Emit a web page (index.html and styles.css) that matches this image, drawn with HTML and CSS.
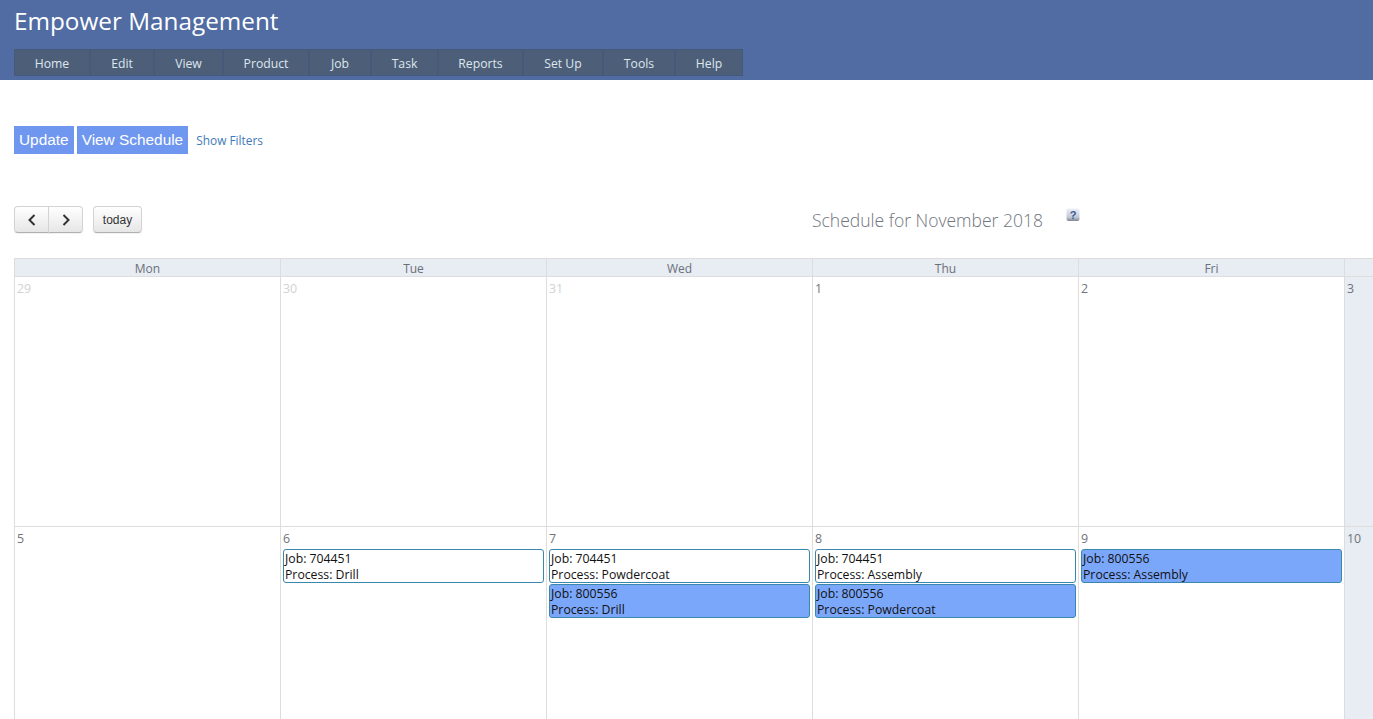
FILE: index.html
```html
<!DOCTYPE html>
<html lang="en">
<head>
<meta charset="utf-8">
<title>Empower Management</title>
<link rel="stylesheet" href="styles.css">
</head>
<body>
<header class="topbar">
  <h1 class="brand">Empower Management</h1>
  <nav class="menu">
    <a class="menu-item w-home">Home</a>
    <a class="menu-item w-edit">Edit</a>
    <a class="menu-item w-view">View</a>
    <a class="menu-item w-product">Product</a>
    <a class="menu-item w-job">Job</a>
    <a class="menu-item w-task">Task</a>
    <a class="menu-item w-reports">Reports</a>
    <a class="menu-item w-setup">Set Up</a>
    <a class="menu-item w-tools">Tools</a>
    <a class="menu-item w-help">Help</a>
  </nav>
</header>
<main class="content">
  <div class="actions">
    <button class="action">Update</button>
    <button class="action">View Schedule</button>
    <a class="filters">Show Filters</a>
  </div>
  <div class="toolbar">
    <div class="pager">
      <button class="fc-btn fc-left"><svg width="10" height="12" viewBox="0 0 10 12"><path d="M7.5 1 2.5 6l5 5" fill="none" stroke="#333" stroke-width="2"/></svg></button>
      <button class="fc-btn fc-right"><svg width="10" height="12" viewBox="0 0 10 12"><path d="M2.5 1l5 5-5 5" fill="none" stroke="#333" stroke-width="2"/></svg></button>
    </div>
    <button class="fc-btn fc-today">today</button>
    <div class="cal-title">
      <h2 class="title-text">Schedule for November 2018</h2>
      <svg class="help" width="14" height="14" viewBox="0 0 14 14"><defs><linearGradient id="hg" x1="0" y1="0" x2="0" y2="1"><stop offset="0" stop-color="#eef0f5"/><stop offset=".7" stop-color="#c2c8d4"/><stop offset="1" stop-color="#7d8593"/></linearGradient></defs><rect x=".5" y=".5" width="13" height="12.5" rx="2" fill="url(#hg)"/><text x="7" y="10.5" text-anchor="middle" class="help-q">?</text></svg>
    </div>
  </div>
  <div class="calendar">
    <div class="dow">Mon</div><div class="dow">Tue</div><div class="dow">Wed</div><div class="dow">Thu</div><div class="dow">Fri</div><div class="dow dow-end"></div>

    <div class="day row1"><span class="num muted">29</span></div>
    <div class="day row1"><span class="num muted">30</span></div>
    <div class="day row1"><span class="num muted">31</span></div>
    <div class="day row1"><span class="num">1</span></div>
    <div class="day row1"><span class="num">2</span></div>
    <div class="day row1 weekend"><span class="num">3</span></div>

    <div class="day row2"><span class="num">5</span></div>
    <div class="day row2"><span class="num">6</span>
      <div class="event">Job: 704451<br>Process: Drill</div>
    </div>
    <div class="day row2"><span class="num">7</span>
      <div class="event">Job: 704451<br>Process: Powdercoat</div>
      <div class="event blue">Job: 800556<br>Process: Drill</div>
    </div>
    <div class="day row2"><span class="num">8</span>
      <div class="event">Job: 704451<br>Process: Assembly</div>
      <div class="event blue">Job: 800556<br>Process: Powdercoat</div>
    </div>
    <div class="day row2"><span class="num">9</span>
      <div class="event blue">Job: 800556<br>Process: Assembly</div>
    </div>
    <div class="day row2 weekend"><span class="num">10</span></div>
  </div>
</main>
</body>
</html>
```
FILE: styles.css
```css
* { box-sizing: border-box; }
html, body { margin: 0; height: 719px; overflow: hidden; background: #fff; }
body { font-family: "Open Sans", "Noto Sans", sans-serif; color: #333; }

.topbar { height: 80px; background: #506ca3; padding: 5px 0 0 14px; }
.brand { margin: 0; height: 44px; font-size: 24.3px; line-height: 32px; font-weight: 400; color: #fff; }
.menu { display: flex; height: 27px; width: 729px; background: #4d5f78; border: 1px solid #46597a; }
.menu-item { display: flex; align-items: center; justify-content: center; height: 100%; padding-top: 2px; font-size: 12.2px; color: #dfe6ee; border-right: 2px solid #47597a; }
.menu-item:last-child { border-right: 0; }
.w-home { width: 76px; }
.w-edit { width: 64px; }
.w-view { width: 69px; }
.w-product { width: 86px; }
.w-job { width: 62px; }
.w-task { width: 67px; }
.w-reports { width: 85px; }
.w-setup { width: 80px; }
.w-tools { width: 72px; }
.w-help { width: 66px; }

.content { padding: 46px 0 0 14px; }
.actions { display: flex; align-items: center; height: 28px; }
.action { height: 28px; margin: 0 3px 0 0; padding: 0 5px; border: 0; background: #6f97ef; color: #fff; font-family: "Liberation Sans", Arial, sans-serif; font-size: 15.4px; }
.filters { margin-left: 5px; font-size: 11.9px; color: #3f7ab8; }

.toolbar { display: flex; align-items: flex-start; height: 52px; margin-top: 52px; position: relative; }
.pager { display: flex; }
.fc-btn { height: 27px; padding: 0; border: 1px solid #d3d3d3; border-bottom-color: #b0b0b0; background: linear-gradient(#fff, #e6e6e6); font-family: "Liberation Sans", Arial, sans-serif; font-size: 12px; color: #333; display: flex; align-items: center; justify-content: center; box-shadow: 0 1px 1px rgba(0,0,0,.06); }
.fc-left { width: 35px; border-radius: 4px 0 0 4px; }
.fc-right { width: 35px; margin-left: -1px; border-radius: 0 4px 4px 0; }
.fc-today { width: 49px; margin-left: 10px; border-radius: 4px; }
.cal-title { display: flex; align-items: flex-start; position: absolute; left: 798px; top: 0; }
.title-text { margin: 3px 0 0; font-size: 17.5px; line-height: 23px; font-weight: 300; color: #6f747d; }
.help { margin: 2px 0 0 23px; }
.help-q { font-family: "Liberation Sans", sans-serif; font-size: 11px; font-weight: 700; fill: #3a5a9a; }

.calendar { display: grid; grid-template-columns: 267px repeat(4, 266px) 29px; width: 1359px; }
.dow { height: 19px; background: #e8ecf3; border: solid #ddd; border-width: 1px 1px 1px 0; font-size: 12px; line-height: 20px; text-align: center; color: #6a7078; }
.dow:first-child { border-left: 1px solid #ddd; }
.dow-end { border-right: 0; }
.day { border-right: 1px solid #ddd; border-bottom: 1px solid #ddd; padding: 2px 2px 0; font-size: 12.4px; }
.day:nth-child(6n+1) { border-left: 1px solid #ddd; }
.row1 { height: 250px; }
.row2 { height: 193px; }
.num { display: block; height: 20px; line-height: 20px; color: #6f7379; }
.muted { color: #d2d2d2; }
.weekend { background: #e8ecf3; border-right: 0; }
.event { height: 34px; margin: 0 0 1px; padding: 1px; border: 1px solid #3a87ad; border-radius: 3px; background: #fff; color: #111; font-size: 12.25px; line-height: 16px; white-space: nowrap; }
.blue { background: #7ba7fb; }
```
